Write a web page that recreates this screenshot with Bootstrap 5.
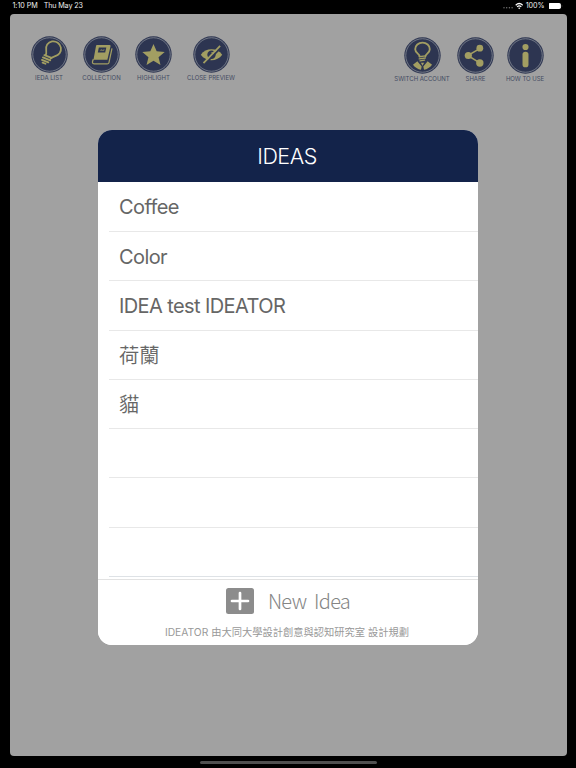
<!DOCTYPE html>
<html lang="zh-Hant">
<head>
<meta charset="utf-8">
<meta name="viewport" content="width=device-width, initial-scale=1">
<title>IDEATOR</title>
<link href="https://cdn.jsdelivr.net/npm/bootstrap@5.3.0/dist/css/bootstrap.min.css" rel="stylesheet">
<style>
  body { background:#000; height:768px; font-family:Inter,"Noto Sans CJK TC",sans-serif; overflow:hidden; }
  .status-bar { height:14px; padding:0 12.5px; font-size:7.2px; line-height:12px; letter-spacing:-.05px; color:#eee; }
  .status-bar svg { display:block; }
  .status-date { margin-left:6px; letter-spacing:-.15px; }
  .battery-level { margin-left:2px; }
  .workspace { height:742px; margin:0 9.5px; background:#a1a1a1; border-radius:4px; }
  .toolbar { height:116px; padding:22px 12.5px 0 13.5px; }
  .tool { height:47px; padding:0; border:0; background:none; color:#434b62; font-size:6px; line-height:8px; white-space:nowrap; }
  .tool svg { width:37px; height:37px; flex:none; margin-top:-.5px; }
  .tool span { margin-top:1px; letter-spacing:0; }
  .tools-right { padding-top:1px; }
  .tools-right .tool span { margin-top:1.5px; letter-spacing:-.03px; }
  .w-idea { width:52px } .w-coll { width:53px } .w-high { width:51px } .w-prev { width:64px }
  .w-swit { width:66px } .w-shar { width:41px } .w-how { width:58px }
  .ideas-panel { width:380px; height:514.5px; border:0; border-radius:14px; overflow:hidden; background:#fff; }
  .ideas-title { height:52px; background:#13234a; color:#fff; font-size:21.5px; font-weight:300; letter-spacing:-.5px; border:0; border-radius:0 !important; padding:2px 2px 0 0; flex:none; }
  .ideas-list { height:397px; padding-left:11px; overflow:hidden; flex:none; border:0 !important; }
  .ideas-list .list-group-item { height:49.3px; flex:none; padding:0 0 0 10px; border-width:0 0 1px; border-color:#e8e8e8; color:#666; font-size:20px; line-height:50px; letter-spacing:-.6px; }
  .ideas-list .list-group-item:first-child { height:50px; }
  .ideas-list .cjk { font-weight:350; font-size:20.3px; letter-spacing:0; line-height:49px; }
  .ideas-panel > .ideas-foot { height:65.5px; border-top:1px solid #e2e2e2 !important; background:#fff; padding:0; flex:none; }
  .new-idea { height:42px; padding:0; border:0; background:none; color:#858585; font-family:"Noto Sans CJK TC",sans-serif; font-weight:300; font-size:20px; line-height:42px; letter-spacing:-.7px; word-spacing:4px; gap:14px; }
  .credit { color:#999; font-size:10.28px; line-height:20px; white-space:nowrap; margin-right:2px; }
  .home-bar { width:177px; height:3px; margin-top:4.5px; border-radius:2px; background:#505050; }
</style>
<script src="https://cdn.jsdelivr.net/npm/bootstrap@5.3.0/dist/js/bootstrap.bundle.min.js"></script>
</head>
<body class="m-0">
<svg class="d-none">
  <symbol id="disc" viewBox="0 0 36 36"><circle cx="18" cy="18" r="17.7" fill="#2d3551"/><circle cx="18" cy="18" r="16.3" fill="none" stroke="#8d929b" stroke-width=".7"/></symbol>
</svg>
<header class="status-bar d-flex justify-content-between">
  <div class="d-flex"><span>1:10 PM</span><span class="status-date">Thu May 23</span></div>
  <div class="d-flex">
    <svg width="12" height="12"><g fill="#777"><circle cx="1" cy="7.8" r=".7"/><circle cx="3.7" cy="7.8" r=".7"/><circle cx="6.4" cy="7.8" r=".7"/><circle cx="9.1" cy="7.8" r=".7"/></g></svg>
    <svg width="9" height="12" viewBox="0 0 9 12"><g fill="none" stroke="#fff" stroke-width="1.2"><path d="M.7 5.2Q4.2 1.8 7.7 5.2M2.1 6.9Q4.2 5 6.3 6.9"/></g><path d="M4.2 9.2 3.1 8Q4.2 7.1 5.3 8z" fill="#fff"/></svg>
    <span class="battery-level">100%</span>
    <svg class="ms-1" width="15" height="12" viewBox="0 0 15 12"><rect x="-.7" y="3" width="12.6" height="6" rx="1.7" fill="#fff"/><path d="M12.8 4.9q1 1.1 0 2.2z" fill="#999"/></svg>
  </div>
</header>
<main class="workspace">
  <nav class="toolbar d-flex justify-content-between">
    <div class="d-flex">
      <button class="tool w-idea d-flex flex-column align-items-center"><svg viewBox="0 0 36 36"><use href="#disc"/><g transform="rotate(35 18 18)" fill="none" stroke="#a29e62" stroke-width="1.7" stroke-linecap="round"><path d="M15.2 20.5c0-3.3-4.6-4.7-4.6-9.1a7.4 7.4 0 0 1 14.8 0c0 4.4-4.2 5.8-4.2 9.4"/><path d="M14.3 21.4 21.5 19.6M14.4 24l7.4-1.8M15 26.5l6.4-1.6M17 28.3l3-.7" stroke-width="1.8"/></g></svg><span>IEDA LIST</span></button>
      <button class="tool w-coll d-flex flex-column align-items-center"><svg viewBox="0 0 36 36"><use href="#disc"/><path d="M13.6 8.8h12.2q1.3 0 1 1.2l-3.1 13.2H10.2l2.5-13.6q.1-.8.9-.8z" fill="#a29e62"/><path d="M10.1 22.5q-2.2 4.6.8 4.6h12.6q1.4 0 1.7-1l3-14" fill="none" stroke="#a29e62" stroke-width="1.2"/><path d="m15.4 11.2h7.3l-1.1 4.8h-7.2z" fill="#2d3551"/><path d="m16.2 14.4 1.6-1.7 1.4 1 1.8-1.2-.5 2z" fill="#a29e62" fill-opacity=".6"/></svg><span>COLLECTION</span></button>
      <button class="tool w-high d-flex flex-column align-items-center"><svg viewBox="0 0 36 36"><use href="#disc"/><path d="m18 7.7 3.1 7.2 7.8.6-6 5.1 1.9 7.7L18 24.2l-6.8 4.1 1.9-7.7-6-5.1 7.8-.6z" fill="#a29e62"/></svg><span>HIGHLIGHT</span></button>
      <button class="tool w-prev d-flex flex-column align-items-center"><svg viewBox="0 0 36 36"><use href="#disc"/><path d="M7.6 18.3C12.5 11.2 23.5 11.2 28.4 18.3 23.5 25.4 12.5 25.4 7.6 18.3z" fill="#a29e62"/><circle cx="18" cy="18.3" r="4.1" fill="#2d3551"/><path d="M18 16a2.5 2.5 0 0 1 2.3 2.3" stroke="#a29e62" fill="none"/><path d="M11.6 27.4 27.4 11" stroke="#2d3551" stroke-width="1.8"/><path d="M10.2 26.4 26.4 9.6" stroke="#a29e62" stroke-width="1.7"/></svg><span>CLOSE PREVIEW</span></button>
    </div>
    <div class="tools-right d-flex">
      <button class="tool w-swit d-flex flex-column align-items-center"><svg viewBox="0 0 36 36"><use href="#disc"/><g fill="none" stroke="#a29e62" stroke-width="1.8" stroke-linecap="round"><path d="M15.2 18.8c0-2.4-4.3-3.1-4.3-6.9a7.1 6.5 0 0 1 14.2 0c0 3.8-4.2 4.5-4.2 6.9"/><path d="m14.8 19.2 6-.9M14.8 21.3l6-.9M15.6 23.2l4.4-.7" stroke-width="1.3"/></g><path d="m13 23.6-4.3 3.3q3.2 4.1 7.8 4.9l.7-3.2zM23 23.6l4.3 3.3q-3.2 4.1-7.8 4.9l-.7-3.2z" fill="#a29e62"/><path d="M16.4 25h3.2L18 28z" fill="#a29e62"/></svg><span>SWITCH ACCOUNT</span></button>
      <button class="tool w-shar d-flex flex-column align-items-center"><svg viewBox="0 0 36 36"><use href="#disc"/><path d="M22.5 11 10.5 18l12 7.5" fill="none" stroke="#a29e62" stroke-width="1.5"/><g fill="#a29e62"><circle cx="22.2" cy="10.9" r="3.3"/><circle cx="11" cy="18" r="3.5"/><circle cx="22.2" cy="25.3" r="3.6"/></g></svg><span>SHARE</span></button>
      <button class="tool w-how d-flex flex-column align-items-center"><svg viewBox="0 0 36 36"><use href="#disc"/><g fill="#a29e62"><circle cx="18" cy="9.7" r="3"/><rect x="15.1" y="14.3" width="5.8" height="15.2" rx="2.8"/></g></svg><span>HOW TO USE</span></button>
    </div>
  </nav>
  <section class="ideas-panel card mx-auto">
    <h1 class="ideas-title card-header d-flex align-items-center justify-content-center m-0">IDEAS</h1>
    <ul class="ideas-list list-group list-group-flush">
      <li class="list-group-item">Coffee</li>
      <li class="list-group-item">Color</li>
      <li class="list-group-item">IDEA test IDEATOR</li>
      <li class="list-group-item cjk">荷蘭</li>
      <li class="list-group-item cjk">貓</li>
      <li class="list-group-item"></li>
      <li class="list-group-item"></li>
      <li class="list-group-item border-bottom"></li>
    </ul>
    <footer class="ideas-foot card-footer d-flex flex-column align-items-center">
      <button class="new-idea d-flex align-items-center"><svg width="28" height="26"><rect width="28" height="26" rx="2.5" fill="#8c8c8c"/><path d="M14 5v16M6 13h16" stroke="#fff" stroke-width="2.7" stroke-linecap="round"/></svg><span>New Idea</span></button>
      <div class="credit">IDEATOR 由大同大學設計創意與認知研究室 設計規劃</div>
    </footer>
  </section>
</main>
<div class="home-bar mx-auto"></div>
</body>
</html>
